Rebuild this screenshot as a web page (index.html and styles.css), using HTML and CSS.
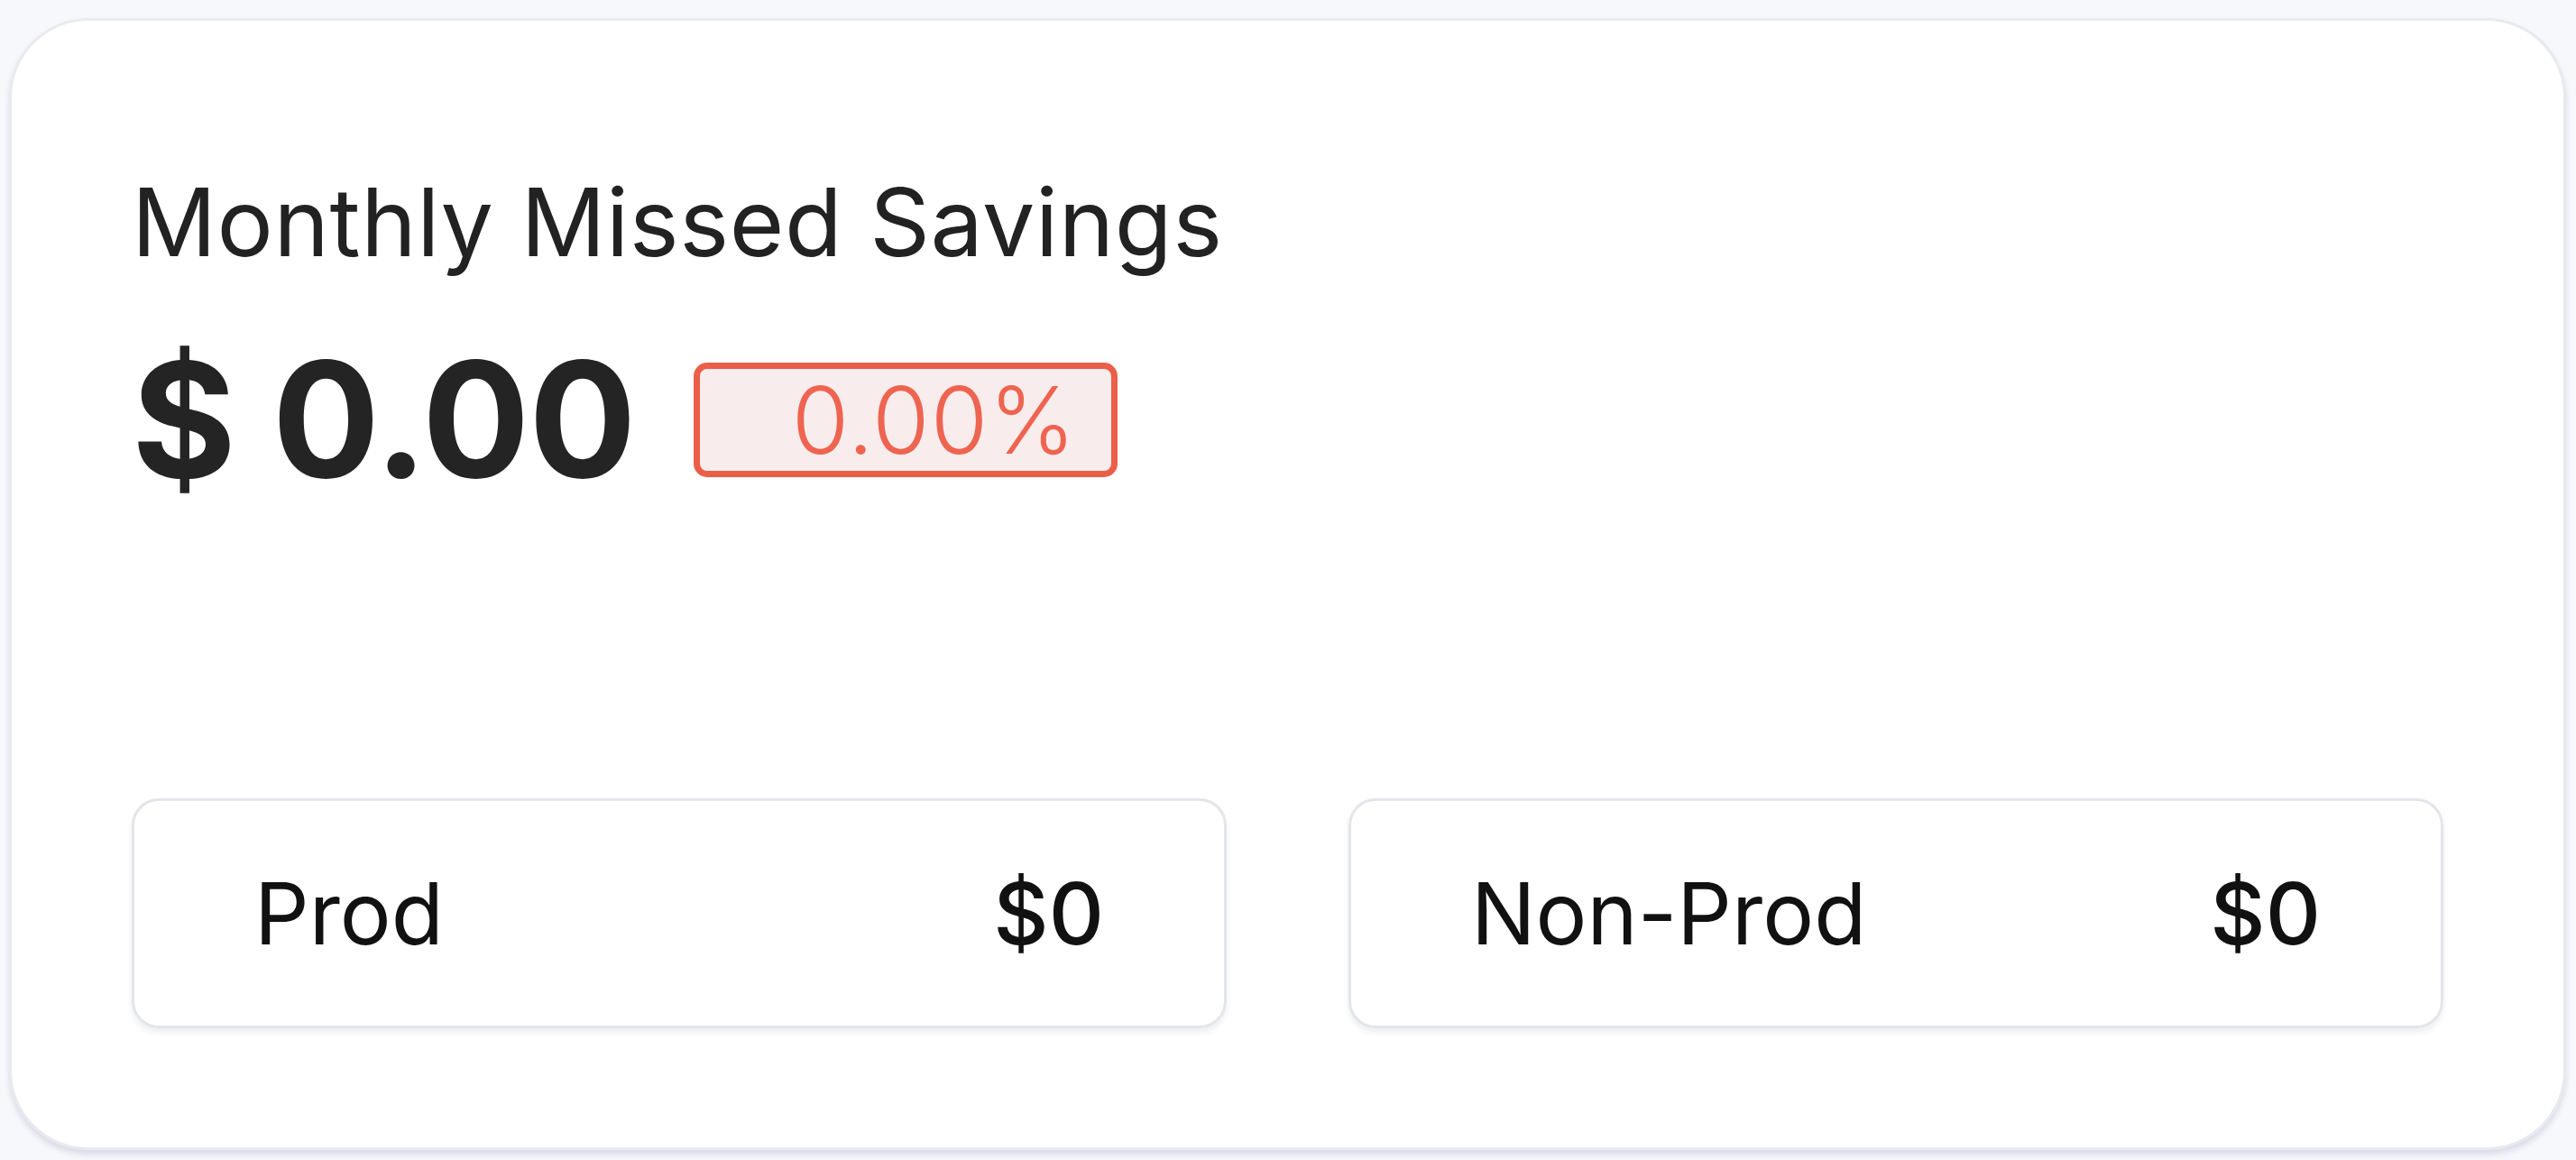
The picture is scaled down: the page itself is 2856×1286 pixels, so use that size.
FILE: index.html
```html
<!DOCTYPE html>
<html lang="en">
<head>
<meta charset="utf-8">
<title>Monthly Missed Savings</title>
<link rel="stylesheet" href="styles.css">
</head>
<body>
  <section class="card">
    <h2 class="title">Monthly Missed Savings</h2>
    <div class="amount-row">
      <span class="amount">$ 0.00</span>
      <span class="badge">0.00%</span>
    </div>
    <div class="spacer"></div>
    <div class="splits">
      <div class="split">
        <span class="split-label">Prod</span>
        <span class="split-value">$0</span>
      </div>
      <div class="split">
        <span class="split-label">Non-Prod</span>
        <span class="split-value">$0</span>
      </div>
    </div>
  </section>
</body>
</html>
```
FILE: styles.css
```css
html, body {
  margin: 0;
  padding: 0;
  background: #f7f8fb;
}
body {
  padding: 20px 11px 11px 10px;
  height: 1286px;
  box-sizing: border-box;
  font-family: Inter, "Noto Sans", sans-serif;
}
.card {
  box-sizing: border-box;
  height: 100%;
  background: #ffffff;
  border: 3px solid #e9eaf0;
  border-radius: 88px;
  box-shadow: 0 5px 6px rgba(40, 50, 110, 0.14);
  padding: 163px 133px 132px 133px;
  display: flex;
  flex-direction: column;
}
.title {
  margin: 0;
  font-size: 104px;
  line-height: 120px;
  font-weight: 400;
  color: #222222;
  letter-spacing: 0.6px;
}
.amount-row {
  margin-top: 59px;
  display: flex;
  align-items: center;
  gap: 64px;
}
.amount {
  font-size: 177px;
  line-height: 200px;
  font-weight: 700;
  color: #242424;
  letter-spacing: -1px;
}
.badge {
  box-sizing: border-box;
  height: 127px;
  display: flex;
  align-items: center;
  padding: 0 38px 0 102px;
  border: 7px solid #eb5e48;
  border-radius: 15px;
  background: #f9ecec;
  color: #ee6450;
  font-size: 103px;
  font-weight: 300;
  letter-spacing: 1px;
}
.spacer {
  flex: 1;
}
.splits {
  display: grid;
  grid-template-columns: 1fr 1fr;
  gap: 135px;
}
.split {
  box-sizing: border-box;
  height: 255px;
  display: flex;
  align-items: center;
  justify-content: space-between;
  padding: 0 133px;
  border: 3px solid #e4e5eb;
  border-radius: 30px;
  box-shadow: 0 5px 6px rgba(40, 50, 110, 0.08);
  font-size: 95px;
  color: #111111;
}
.split-label {
  font-weight: 400;
}
.split-value {
  font-weight: 500;
}
```
